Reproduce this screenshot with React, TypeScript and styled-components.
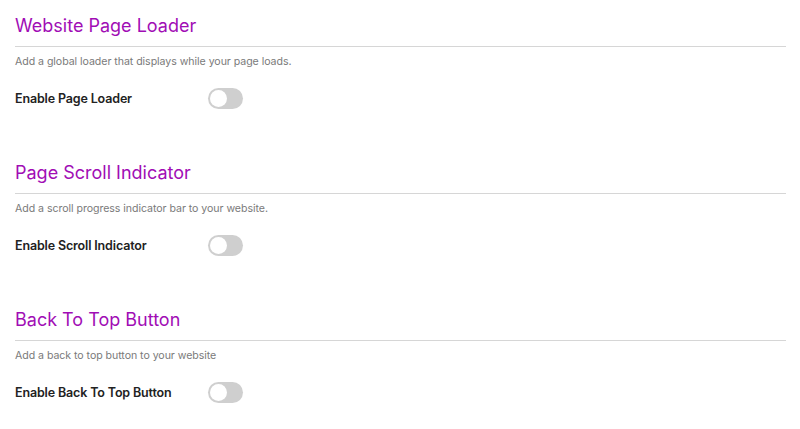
import React, { useState } from 'react';
import styled, { createGlobalStyle } from 'styled-components';

const GlobalStyle = createGlobalStyle`
  body {
    margin: 0;
    background: #fff;
    font-family: Inter, "Open Sans", sans-serif;
  }
`;

const Page = styled.div`
  padding: 15px 14px 0 15px;
  display: flex;
  flex-direction: column;
  gap: 53px;
`;

const Section = styled.section`
  display: flex;
  flex-direction: column;
`;

const Title = styled.h2`
  margin: 0;
  padding-bottom: 9px;
  font-size: 18px;
  line-height: 22px;
  font-weight: 400;
  color: #a10db5;
  border-bottom: 1px solid #d6d6d6;
`;

const Description = styled.p`
  margin: 8px 0 0;
  font-size: 10.6px;
  line-height: 14px;
  letter-spacing: -0.05px;
  color: #7a7a7a;
`;

const Row = styled.div`
  display: flex;
  align-items: center;
  margin-top: 19px;
  height: 21px;
`;

const Label = styled.span`
  width: 193px;
  font-size: 12.5px;
  font-weight: 600;
  letter-spacing: -0.15px;
  color: #222;
`;

const Toggle = styled.button<{ $on: boolean }>`
  position: relative;
  width: 35px;
  height: 21px;
  padding: 0;
  border: none;
  border-radius: 11px;
  background: ${(p) => (p.$on ? '#a10db5' : '#cfcfcf')};
  cursor: pointer;
  transition: background 0.2s;

  &::after {
    content: '';
    position: absolute;
    top: 2px;
    left: ${(p) => (p.$on ? '16px' : '2px')};
    width: 17px;
    height: 17px;
    border-radius: 50%;
    background: #fff;
    transition: left 0.2s;
  }
`;

const sections = [
  {
    title: 'Website Page Loader',
    desc: 'Add a global loader that displays while your page loads.',
    label: 'Enable Page Loader',
  },
  {
    title: 'Page Scroll Indicator',
    desc: 'Add a scroll progress indicator bar to your website.',
    label: 'Enable Scroll Indicator',
  },
  {
    title: 'Back To Top Button',
    desc: 'Add a back to top button to your website',
    label: 'Enable Back To Top Button',
  },
];

const App: React.FC = () => {
  const [enabled, setEnabled] = useState<boolean[]>([false, false, false]);

  const flip = (i: number) =>
    setEnabled((prev) => prev.map((v, j) => (j === i ? !v : v)));

  return (
    <>
      <GlobalStyle />
      <Page>
        {sections.map((s, i) => (
          <Section key={s.title}>
            <Title>{s.title}</Title>
            <Description>{s.desc}</Description>
            <Row>
              <Label>{s.label}</Label>
              <Toggle $on={enabled[i]} onClick={() => flip(i)} aria-label={s.label} />
            </Row>
          </Section>
        ))}
      </Page>
    </>
  );
};

export default App;
